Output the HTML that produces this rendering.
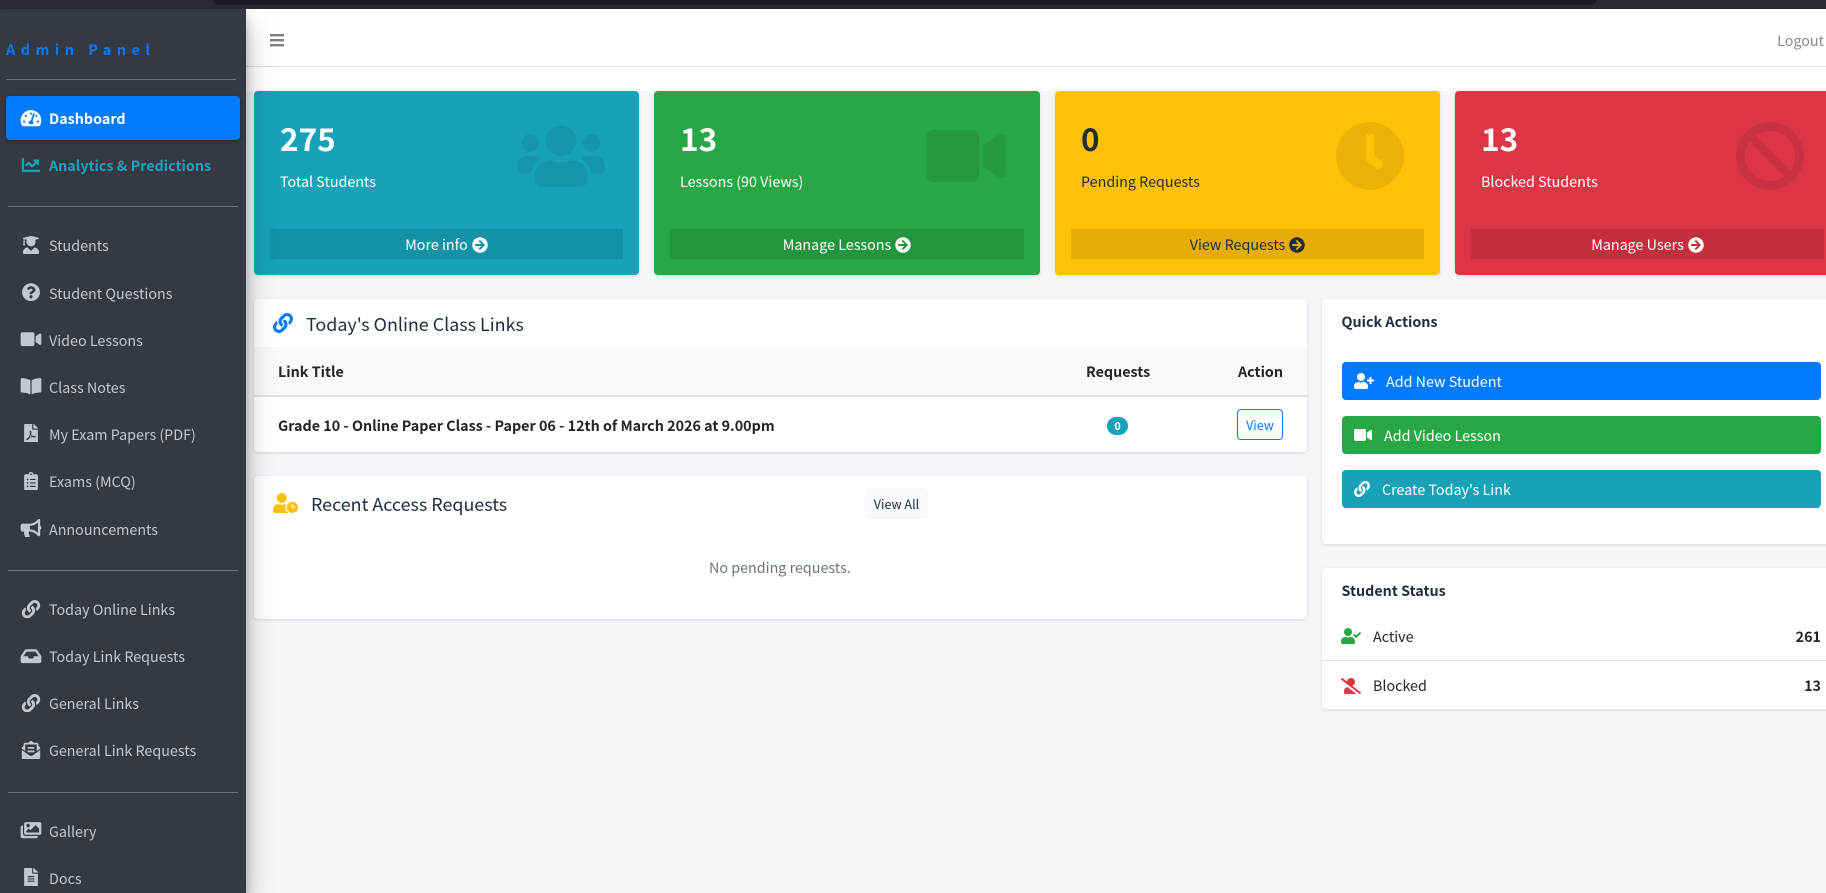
<!DOCTYPE html>
<html lang="en">
<head>
<meta charset="utf-8">
<title>Admin Panel</title>
<style>
html,body{margin:0;padding:0;width:1826px;height:893px;overflow:hidden;background:#f4f6f9}
body{position:relative;font-family:"Noto Sans CJK JP","Liberation Sans",sans-serif;font-size:14.32px;color:#212529}
div,svg,span{position:absolute;box-sizing:border-box}
.t{white-space:nowrap;line-height:24px;height:24px}
.b{font-weight:700}
.nav{left:49px;color:#c2c7d0}
svg{fill:currentColor;display:block;overflow:hidden}
.ni{left:18.5px;width:24px;height:18.4px;color:#c2c7d0}
.hr{height:1px;background:#6c727a}
.card{top:91px;width:385px;height:184px;border-radius:4px;color:#fff;box-shadow:0 1px 3px rgba(0,0,0,.12)}
.num{left:26px;top:22px;font-size:31.5px;font-weight:700;line-height:50px;white-space:nowrap}
.lab{left:26px;top:79px;line-height:24px;white-space:nowrap}
.big{top:30px;width:88px;height:70px;color:rgba(0,0,0,.08)}
.foot{left:16px;right:16px;top:138px;height:30px;background:rgba(0,0,0,.1);text-align:center;line-height:32px}
.foot span{position:static}
.foot svg{position:static;display:inline-block;width:16px;height:16px;vertical-align:-3px;margin-left:4px}
.panel{background:#fff;border-radius:4px;box-shadow:0 1px 3px rgba(0,0,0,.12)}
.btn{left:20px;width:479px;height:38px;border-radius:4px;color:#fff}
</style>
</head>
<body>
<svg width="0" height="0" style="position:absolute;left:0;top:0">
<symbol id="users" viewBox="0 0 640 512"><path d="M96 224c35.3 0 64-28.7 64-64s-28.7-64-64-64-64 28.7-64 64 28.7 64 64 64zm448 0c35.3 0 64-28.7 64-64s-28.7-64-64-64-64 28.7-64 64 28.7 64 64 64zm32 32h-64c-17.6 0-33.5 7.1-45.1 18.6 40.3 22.1 68.9 62 75.1 109.4h66c17.7 0 32-14.3 32-32v-32c0-35.3-28.7-64-64-64zm-256 0c61.9 0 112-50.1 112-112S381.9 32 320 32 208 82.1 208 144s50.1 112 112 112zm76.8 32h-8.3c-20.8 10-43.9 16-68.5 16s-47.6-6-68.5-16h-8.3C179.6 288 128 339.6 128 403.2V432c0 26.5 21.5 48 48 48h288c26.5 0 48-21.5 48-48v-28.8c0-63.6-51.6-115.2-115.2-115.2zm-223.7-13.4C161.5 263.1 145.6 256 128 256H64c-35.3 0-64 28.7-64 64v32c0 17.7 14.3 32 32 32h65.9c6.3-47.4 34.9-87.3 75.2-109.4z"/></symbol>
<symbol id="video" viewBox="0 0 576 512"><path d="M336.2 64H47.8C21.4 64 0 85.4 0 111.8v288.4C0 426.6 21.4 448 47.8 448h288.4c26.4 0 47.8-21.4 47.8-47.8V111.8c0-26.4-21.4-47.8-47.8-47.8zm189.4 37.7L416 177.3v157.4l109.6 75.5c21.2 14.6 50.4-.3 50.4-25.8V127.5c0-25.4-29.1-40.4-50.4-25.8z"/></symbol>
<symbol id="clock" viewBox="0 0 512 512"><path d="M256,8C119,8,8,119,8,256S119,504,256,504,504,393,504,256,393,8,256,8Zm92.49,313h0l-20,25a16,16,0,0,1-22.49,2.5h0l-67-49.72a40,40,0,0,1-15-31.23V112a16,16,0,0,1,16-16h32a16,16,0,0,1,16,16V256l58,42.5A16,16,0,0,1,348.49,321Z"/></symbol>
<symbol id="ban" viewBox="0 0 512 512"><path d="M256 8C119.034 8 8 119.033 8 256s111.034 248 248 248 248-111.034 248-248S392.967 8 256 8zm130.108 117.892c65.448 65.448 70 165.481 20.677 235.637L150.47 105.216c70.204-49.356 170.226-44.735 235.638 20.676zM125.892 386.108c-65.448-65.448-70-165.481-20.677-235.637L361.53 406.784c-70.203 49.356-170.226 44.736-235.638-20.676z"/></symbol>
<symbol id="arrow" viewBox="0 0 512 512"><path d="M256 8c137 0 248 111 248 248S393 504 256 504 8 393 8 256 119 8 256 8zm-28.9 143.6l75.5 72.4H120c-13.3 0-24 10.7-24 24v16c0 13.3 10.7 24 24 24h182.6l-75.5 72.4c-9.7 9.3-9.9 24.8-.4 34.3l11 10.9c9.4 9.4 24.6 9.4 33.9 0L404.3 273c9.4-9.4 9.4-24.6 0-33.9L271.6 106.3c-9.4-9.4-24.6-9.4-33.9 0l-11 10.9c-9.5 9.6-9.3 25.1.4 34.4z"/></symbol>
<symbol id="link" viewBox="0 0 512 512"><path d="M326.612 185.391c59.747 59.809 58.927 155.698.36 214.59-.11.12-.24.25-.36.37l-67.2 67.2c-59.27 59.27-155.699 59.262-214.96 0-59.27-59.26-59.27-155.7 0-214.96l37.106-37.106c9.84-9.84 26.786-3.3 27.294 10.606.648 17.722 3.826 35.527 9.69 52.721 1.986 5.822.567 12.262-3.783 16.612l-13.087 13.087c-28.026 28.026-28.905 73.66-1.155 101.96 28.024 28.579 74.086 28.749 102.325.51l67.2-67.19c28.191-28.191 28.073-73.757 0-101.83-3.701-3.694-7.429-6.564-10.341-8.569a16.037 16.037 0 0 1-6.947-12.606c-.396-10.567 3.348-21.456 11.698-29.806l21.054-21.055c5.521-5.521 14.182-6.199 20.584-1.731a152.482 152.482 0 0 1 20.522 17.197zM467.547 44.449c-59.261-59.262-155.69-59.27-214.96 0l-67.2 67.2c-.12.12-.25.25-.36.37-58.566 58.892-59.387 154.781.36 214.59a152.454 152.454 0 0 0 20.521 17.196c6.402 4.468 15.064 3.789 20.584-1.731l21.054-21.055c8.35-8.35 12.094-19.239 11.698-29.806a16.037 16.037 0 0 0-6.947-12.606c-2.912-2.005-6.64-4.875-10.341-8.569-28.073-28.073-28.191-73.639 0-101.83l67.2-67.19c28.239-28.239 74.3-28.069 102.325.51 27.75 28.3 26.872 73.934-1.155 101.96l-13.087 13.087c-4.35 4.35-5.769 10.79-3.783 16.612 5.864 17.194 9.042 34.999 9.69 52.721.509 13.906 17.454 20.446 27.294 10.606l37.106-37.106c59.271-59.259 59.271-155.699.001-214.959z"/></symbol>
<symbol id="question" viewBox="0 0 512 512"><path d="M504 256c0 136.997-111.043 248-248 248S8 392.997 8 256C8 119.083 119.043 8 256 8s248 111.083 248 248zM262.655 90c-54.497 0-89.255 22.957-116.549 63.758-3.536 5.286-2.353 12.415 2.715 16.258l34.699 26.31c5.205 3.947 12.621 3.008 16.665-2.122 17.864-22.658 30.113-35.797 57.303-35.797 20.429 0 45.698 13.148 45.698 32.958 0 14.976-12.363 22.667-32.534 33.976C247.128 238.528 216 254.941 216 296v4c0 6.627 5.373 12 12 12h56c6.627 0 12-5.373 12-12v-1.333c0-28.462 83.186-29.647 83.186-106.667 0-58.002-60.165-102-116.531-102zM256 338c-25.365 0-46 20.635-46 46 0 25.364 20.635 46 46 46s46-20.636 46-46c0-25.365-20.635-46-46-46z"/></symbol>
<symbol id="book" viewBox="0 0 576 512"><path d="M542.22 32.05c-54.8 3.11-163.72 14.43-230.96 55.59-4.64 2.84-7.27 7.89-7.27 13.17v363.87c0 11.55 12.63 18.85 23.28 13.49 69.18-34.82 169.23-44.32 218.7-46.92 16.89-.89 30.02-14.43 30.02-30.66V62.75c.01-17.71-15.35-31.74-33.77-30.7zM264.73 87.64C197.5 46.48 88.58 35.17 33.78 32.05 15.36 31.01 0 45.04 0 62.75V400.6c0 16.24 13.13 29.78 30.02 30.66 49.49 2.6 149.59 12.11 218.77 46.95 10.62 5.35 23.21-1.94 23.21-13.46V100.63c0-5.29-2.62-10.14-7.27-12.99z"/></symbol>
<symbol id="filealt" viewBox="0 0 384 512"><path d="M224 136V0H24C10.7 0 0 10.7 0 24v464c0 13.3 10.7 24 24 24h336c13.3 0 24-10.7 24-24V160H248c-13.2 0-24-10.8-24-24zm64 236c0 6.6-5.4 12-12 12H108c-6.6 0-12-5.4-12-12v-8c0-6.6 5.4-12 12-12h168c6.6 0 12 5.4 12 12v8zm0-64c0 6.6-5.4 12-12 12H108c-6.6 0-12-5.4-12-12v-8c0-6.6 5.4-12 12-12h168c6.6 0 12 5.4 12 12v8zm0-72v8c0 6.6-5.4 12-12 12H108c-6.6 0-12-5.4-12-12v-8c0-6.6 5.4-12 12-12h168c6.6 0 12 5.4 12 12zm96-114.1v6.1H256V0h6.1c6.4 0 12.5 2.5 17 7l97.9 98c4.5 4.5 7 10.6 7 16.9z"/></symbol>
<symbol id="pdf" viewBox="0 0 384 512"><path d="M181.9 256.1c-5-16-4.9-46.9-2-46.9 8.4 0 7.6 36.9 2 46.9zm-1.7 47.2c-7.7 20.2-17.3 43.3-28.4 62.7 18.3-7 39-17.2 62.9-21.9-12.7-9.6-24.9-23.4-34.5-40.8zM86.1 428.1c0 .8 13.2-5.4 34.9-40.2-6.7 6.3-29.1 24.5-34.9 40.2zM248 160h136v328c0 13.3-10.7 24-24 24H24c-13.3 0-24-10.7-24-24V24C0 10.7 10.7 0 24 0h200v136c0 13.2 10.8 24 24 24zm-8 171.8c-20-12.2-33.3-29-42.7-53.8 4.5-18.5 11.6-46.6 6.2-64.2-4.7-29.4-42.4-26.5-47.8-6.8-5 18.3-.4 44.1 8.1 77-11.6 27.6-28.7 64.6-40.8 85.8-.1 0-.1.1-.2.1-27.1 13.9-73.6 44.5-54.5 68 5.6 6.9 16 10 21.5 10 17.9 0 35.7-18 61.1-61.8 25.8-8.5 54.1-19.1 79-23.2 21.7 11.8 47.1 19.5 64 19.5 29.2 0 31.2-32 19.7-43.4-13.9-13.6-54.3-9.7-73.6-7.2zM377 105L279 7c-4.5-4.5-10.6-7-17-7h-6v128h128v-6.1c0-6.3-2.5-12.4-7-16.9zm-74.1 255.3c4.1-2.7-2.5-11.9-42.8-9 37.1 15.8 42.8 9 42.8 9z"/></symbol>
<symbol id="clip" viewBox="0 0 384 512"><path d="M336 64h-80c0-35.3-28.7-64-64-64s-64 28.7-64 64H48C21.5 64 0 85.5 0 112v352c0 26.5 21.5 48 48 48h288c26.5 0 48-21.5 48-48V112c0-26.5-21.5-48-48-48zM96 424c-13.3 0-24-10.7-24-24s10.7-24 24-24 24 10.7 24 24-10.7 24-24 24zm0-96c-13.3 0-24-10.7-24-24s10.7-24 24-24 24 10.7 24 24-10.7 24-24 24zm0-96c-13.3 0-24-10.7-24-24s10.7-24 24-24 24 10.7 24 24-10.7 24-24 24zm96-192c13.3 0 24 10.7 24 24s-10.7 24-24 24-24-10.7-24-24 10.7-24 24-24zm128 368c0 4.4-3.6 8-8 8H168c-4.4 0-8-3.6-8-8v-16c0-4.4 3.6-8 8-8h144c4.4 0 8 3.6 8 8v16zm0-96c0 4.4-3.6 8-8 8H168c-4.4 0-8-3.6-8-8v-16c0-4.4 3.6-8 8-8h144c4.4 0 8 3.6 8 8v16zm0-96c0 4.4-3.6 8-8 8H168c-4.4 0-8-3.6-8-8v-16c0-4.4 3.6-8 8-8h144c4.4 0 8 3.6 8 8v16z"/></symbol>
<symbol id="horn" viewBox="0 0 576 512"><path d="M576 240c0-23.63-12.95-44.04-32-55.12V32.01C544 23.26 537.02 0 512 0c-7.12 0-14.19 2.38-19.98 7.02l-85.03 68.03C364.28 109.19 310.66 128 256 128H64c-35.35 0-64 28.65-64 64v96c0 35.35 28.65 64 64 64h33.7c-1.39 10.48-2.18 21.14-2.18 32 0 39.77 9.26 77.35 25.56 110.94 5.19 10.69 16.52 17.06 28.4 17.06h74.28c26.05 0 41.69-29.84 25.9-50.56-16.4-21.52-26.15-48.36-26.15-77.44 0-11.11 1.62-21.79 4.41-32H256c54.66 0 108.28 18.81 150.98 52.95l85.03 68.03a32.023 32.023 0 0 0 19.98 7.02c24.92 0 32-22.78 32-32V295.13C563.05 284.04 576 263.63 576 240zm-96 141.42l-33.05-26.44C392.95 311.78 325.12 288 256 288v-96c69.12 0 136.95-23.78 190.95-66.98L480 98.58v282.84z"/></symbol>
<symbol id="inbox" viewBox="0 0 576 512"><path d="M567.938 243.908L462.25 85.374A48.003 48.003 0 0 0 422.311 64H153.689a48 48 0 0 0-39.938 21.374L8.062 243.908A47.994 47.994 0 0 0 0 270.533V400c0 26.51 21.49 48 48 48h480c26.51 0 48-21.49 48-48V270.533a47.994 47.994 0 0 0-8.062-26.625zM162.252 128h251.497l85.333 128H376l-32 64H232l-32-64H76.918l85.334-128z"/></symbol>
<symbol id="tach" viewBox="0 0 576 512"><path d="M288 32C128.94 32 0 160.94 0 320c0 52.8 14.25 102.26 39.06 144.8 5.61 9.62 16.3 15.2 27.44 15.2h443c11.14 0 21.83-5.58 27.44-15.2C561.75 422.26 576 372.8 576 320c0-159.06-128.94-288-288-288zm0 64c14.71 0 26.58 10.13 30.32 23.65-1.11 2.26-2.64 4.23-3.45 6.67l-9.22 27.67c-5.13 3.49-10.97 6.01-17.64 6.01-17.67 0-32-14.33-32-32S270.33 96 288 96zM96 384c-17.67 0-32-14.33-32-32s14.33-32 32-32 32 14.33 32 32-14.33 32-32 32zm48-160c-17.67 0-32-14.33-32-32s14.33-32 32-32 32 14.33 32 32-14.33 32-32 32zm246.77-72.41l-61.33 184C343.13 347.33 352 364.54 352 384c0 11.72-3.38 22.55-8.88 32H232.88c-5.5-9.45-8.88-20.28-8.88-32 0-33.94 26.5-61.43 59.9-63.59l61.34-184.01c4.17-12.56 17.73-19.45 30.36-15.17 12.57 4.19 19.35 17.79 15.17 30.36zm14.66 57.2l15.52-46.55c3.47-1.29 7.13-2.23 11.05-2.23 17.67 0 32 14.33 32 32s-14.33 32-32 32c-11.38-.01-20.89-6.28-26.57-15.22zM480 384c-17.67 0-32-14.33-32-32s14.33-32 32-32 32 14.33 32 32-14.33 32-32 32z"/></symbol>
<symbol id="chart" viewBox="0 0 512 512"><path d="M496 384H64V80c0-8.84-7.16-16-16-16H16C7.16 64 0 71.16 0 80v336c0 17.67 14.33 32 32 32h464c8.84 0 16-7.16 16-16v-32c0-8.84-7.16-16-16-16zM464 96H345.94c-21.38 0-32.09 25.85-16.97 40.97l32.4 32.4L288 242.75l-73.37-73.37c-12.5-12.5-32.76-12.5-45.25 0l-68.69 68.69c-6.25 6.25-6.25 16.38 0 22.63l22.62 22.62c6.25 6.25 16.38 6.25 22.63 0L192 237.25l73.37 73.37c12.5 12.5 32.76 12.5 45.25 0l96-96 32.4 32.4c15.12 15.12 40.97 4.41 40.97-16.97V112c.01-8.84-7.15-16-15.99-16z"/></symbol>
<symbol id="grad" viewBox="0 0 448 512"><path d="M319.4 320.6L224 416l-95.4-95.4C57.1 323.7 0 382.2 0 454.4v9.6c0 26.5 21.5 48 48 48h352c26.5 0 48-21.5 48-48v-9.6c0-72.2-57.1-130.7-128.6-133.8zM13.6 79.8l6.4 1.5v58.4c-7 4.2-12 11.5-12 20.3 0 8.4 4.6 15.4 11.1 19.7L3.5 242c-1.7 6.9 2.1 14 7.6 14h41.8c5.5 0 9.3-7.1 7.6-14l-15.6-62.3C51.4 175.4 56 168.4 56 160c0-8.8-5-16.1-12-20.3V87.1l66 15.9c-8.6 17.2-14 36.4-14 57 0 70.7 57.3 128 128 128s128-57.3 128-128c0-20.6-5.3-39.8-14-57l96.3-23.2c18.2-4.4 18.2-27.1 0-31.5l-190.4-46c-13-3.1-26.7-3.1-39.7 0L13.6 48.2c-18.1 4.4-18.1 27.2 0 31.6z"/></symbol>
<symbol id="images" viewBox="0 0 576 512"><path d="M480 416v16c0 26.51-21.49 48-48 48H48c-26.51 0-48-21.49-48-48V176c0-26.51 21.49-48 48-48h16v208c0 44.112 35.888 80 80 80h336zm96-80V80c0-26.51-21.49-48-48-48H144c-26.51 0-48 21.49-48 48v256c0 26.51 21.49 48 48 48h384c26.51 0 48-21.49 48-48zM256 128c0 26.51-21.49 48-48 48s-48-21.49-48-48 21.49-48 48-48 48 21.49 48 48zm-96 144l55.515-55.515c4.686-4.686 12.284-4.686 16.971 0L272 256l135.515-135.515c4.686-4.686 12.284-4.686 16.971 0L512 208v112H160v-48z"/></symbol>
<symbol id="envtext" viewBox="0 0 512 512"><path d="M176 216h160c8.84 0 16-7.16 16-16v-16c0-8.84-7.16-16-16-16H176c-8.84 0-16 7.16-16 16v16c0 8.84 7.16 16 16 16zm-16 80c0 8.84 7.16 16 16 16h160c8.84 0 16-7.16 16-16v-16c0-8.84-7.16-16-16-16H176c-8.84 0-16 7.16-16 16v16zm96 121.13c-16.42 0-32.84-5.06-46.86-15.19L0 250.86V464c0 26.51 21.49 48 48 48h416c26.51 0 48-21.49 48-48V250.86L302.86 401.94c-14.02 10.12-30.44 15.19-46.86 15.19zm237.61-254.18c-8.85-6.94-17.24-13.47-29.61-22.81V96c0-26.51-21.49-48-48-48h-77.55c-3.04-2.2-5.87-4.26-9.04-6.56C312.6 29.17 279.2-.35 256 0c-23.2-.35-56.59 29.17-73.41 41.44-3.17 2.3-6 4.36-9.04 6.56H96c-26.51 0-48 21.49-48 48v44.14c-12.37 9.33-20.76 15.87-29.61 22.81A47.995 47.995 0 0 0 0 200.72v10.65l96 69.35V96h320v184.72l96-69.35v-10.65c0-14.74-6.78-28.67-18.39-37.77z"/></symbol>
<symbol id="userclock" viewBox="0 0 640 512"><path d="M496 224c-79.6 0-144 64.4-144 144s64.4 144 144 144 144-64.4 144-144-64.4-144-144-144zm64 150.3c0 5.3-4.4 9.7-9.7 9.7h-60.6c-5.3 0-9.7-4.4-9.7-9.7v-76.6c0-5.3 4.4-9.7 9.7-9.7h12.6c5.3 0 9.7 4.4 9.7 9.7V352h38.3c5.3 0 9.7 4.4 9.7 9.7v12.6zM320 368c0-27.8 6.7-54.1 18.2-77.5-8-1.5-16.2-2.5-24.6-2.5h-16.7c-22.2 10.2-46.9 16-72.9 16s-50.6-5.8-72.9-16h-16.7C60.2 288 0 348.2 0 422.4V464c0 26.5 21.5 48 48 48h347.1c-45.3-31.9-75.1-84.5-75.1-144zm-96-112c70.7 0 128-57.3 128-128S294.7 0 224 0 96 57.3 96 128s57.3 128 128 128z"/></symbol>
<symbol id="userplus" viewBox="0 0 640 512"><path d="M624 208h-64v-64c0-8.8-7.2-16-16-16h-32c-8.8 0-16 7.2-16 16v64h-64c-8.8 0-16 7.2-16 16v32c0 8.8 7.2 16 16 16h64v64c0 8.8 7.2 16 16 16h32c8.8 0 16-7.2 16-16v-64h64c8.8 0 16-7.2 16-16v-32c0-8.8-7.2-16-16-16zm-400 48c70.7 0 128-57.3 128-128S294.7 0 224 0 96 57.3 96 128s57.3 128 128 128zm89.6 32h-16.7c-22.2 10.2-46.9 16-72.9 16s-50.6-5.8-72.9-16h-16.7C60.2 288 0 348.2 0 422.4V464c0 26.5 21.5 48 48 48h352c26.5 0 48-21.5 48-48v-41.6c0-74.2-60.2-134.4-134.4-134.4z"/></symbol>
<symbol id="usercheck" viewBox="0 0 640 512"><path d="M224 256c70.7 0 128-57.3 128-128S294.7 0 224 0 96 57.3 96 128s57.3 128 128 128zm89.6 32h-16.7c-22.2 10.2-46.9 16-72.9 16s-50.6-5.8-72.9-16h-16.7C60.2 288 0 348.2 0 422.4V464c0 26.5 21.5 48 48 48h352c26.5 0 48-21.5 48-48v-41.6c0-74.2-60.2-134.4-134.4-134.4zm323-128.4l-27.8-28.1c-4.6-4.7-12.1-4.7-16.8-.1l-104.8 104-45.5-45.8c-4.6-4.7-12.1-4.7-16.8-.1l-28.1 27.9c-4.7 4.6-4.7 12.1-.1 16.8l81.7 82.3c4.6 4.7 12.1 4.7 16.8.1l141.3-140.2c4.6-4.7 4.7-12.2.1-16.8z"/></symbol>
<symbol id="userslash" viewBox="0 0 640 512"><path d="M633.8 458.1L362.3 248.3C412.1 230.7 448 183.8 448 128 448 57.3 390.7 0 320 0c-67.1 0-121.5 51.8-126.9 117.4L45.5 3.4C38.5-2 28.5-.8 23 6.2L3.4 31.4c-5.4 7-4.2 17 2.8 22.4l588.4 454.7c7 5.4 17 4.2 22.5-2.8l19.6-25.3c5.4-6.8 4.1-16.9-2.9-22.3zM96 422.4V464c0 26.5 21.5 48 48 48h350.2L207.4 290.3C144.2 301.3 96 356 96 422.4z"/></symbol>
</svg>

<!-- browser chrome strip -->
<div style="left:0;top:0;width:1826px;height:9px;background:#2a2a35"></div>
<div style="left:213px;top:0;width:1383px;height:5px;background:#1c1c24;border-radius:0 0 5px 5px"></div>

<!-- navbar -->
<div style="left:246px;top:9px;width:1580px;height:82px;background:#fff"></div>
<div style="left:246px;top:66px;width:1580px;height:1px;background:#e0e0ea"></div>
<svg style="left:270px;top:33px;width:14px;height:14px;color:#808080"><rect x="0" y="1" width="14" height="2.4"/><rect x="0" y="6" width="14" height="2.4"/><rect x="0" y="11" width="14" height="2.4"/></svg>
<div class="t" style="right:2px;top:29px;color:#858a8f">Logout</div>

<!-- stat cards -->
<div class="card" style="left:254px;background:#17a2b8">
  <div class="num">275</div><div class="lab">Total Students</div>
  <svg class="big" style="left:263px"><use href="#users"/></svg>
  <div class="foot"><span>More info</span><svg><use href="#arrow"/></svg></div>
</div>
<div class="card" style="left:654px;width:386px;background:#28a745">
  <div class="num">13</div><div class="lab">Lessons (90 Views)</div>
  <svg class="big" style="left:267.5px"><use href="#video"/></svg>
  <div class="foot"><span>Manage Lessons</span><svg><use href="#arrow"/></svg></div>
</div>
<div class="card" style="left:1055px;background:#ffc107;color:#1f2d3d">
  <div class="num">0</div><div class="lab">Pending Requests</div>
  <svg class="big" style="left:271px"><use href="#clock"/></svg>
  <div class="foot"><span>View Requests</span><svg><use href="#arrow"/></svg></div>
</div>
<div class="card" style="left:1455px;background:#dc3545">
  <div class="num">13</div><div class="lab">Blocked Students</div>
  <svg class="big" style="left:271px"><use href="#ban"/></svg>
  <div class="foot"><span>Manage Users</span><svg><use href="#arrow"/></svg></div>
</div>

<!-- Today's links -->
<div class="panel" style="left:254px;top:299px;width:1053px;height:153px"></div>
<svg style="left:273px;top:313px;width:20px;height:20px;color:#007bff"><use href="#link"/></svg>
<div class="t" style="left:306px;top:312px;font-size:17.9px;color:#1f2d3d">Today's Online Class Links</div>
<div style="left:254px;top:347px;width:1053px;height:50px;background:#f8f9fa;border-bottom:2px solid #dee2e6"></div>
<div class="t b" style="left:278px;top:360px;color:#212529">Link Title</div>
<div class="t b" style="left:1086px;top:360px">Requests</div>
<div class="t b" style="left:1238px;top:360px">Action</div>
<div class="t b" style="left:278px;top:414px">Grade 10 - Online Paper Class - Paper 06 - 12th of March 2026 at 9.00pm</div>
<div class="b" style="left:1107px;top:417px;width:21px;height:18px;border-radius:10px;background:#17a2b8;color:#fff;font-size:10.8px;line-height:18px;text-align:center">0</div>
<div style="left:1237px;top:409px;width:46px;height:31px;border:1px solid #007bff;border-radius:4px;color:#007bff;font-size:12.6px;line-height:29px;text-align:center">View</div>

<!-- Recent requests -->
<div class="panel" style="left:254px;top:476px;width:1053px;height:143px"></div>
<svg style="left:273px;top:493px;width:25px;height:20px;color:#ffc107"><use href="#userclock"/></svg>
<div class="t" style="left:311px;top:492px;font-size:17.9px;color:#1f2d3d">Recent Access Requests</div>
<div style="left:865px;top:488px;width:63px;height:31px;background:#f8f9fa;border-radius:4px;font-size:12.6px;line-height:31px;text-align:center;color:#1f2d3d">View All</div>
<div class="t" style="left:709px;top:556px;color:#6c757d">No pending requests.</div>

<!-- Quick actions -->
<div class="panel" style="left:1322px;top:299px;width:520px;height:245px">
  <div class="t b" style="left:19.5px;top:11px;color:#1f2d3d">Quick Actions</div>
  <div class="btn" style="top:63px;background:#007bff">
    <svg style="left:12px;top:11px;width:20px;height:16px"><use href="#userplus"/></svg>
    <div class="t" style="left:44px;top:8px">Add New Student</div>
  </div>
  <div class="btn" style="top:117px;background:#28a745">
    <svg style="left:12px;top:11px;width:18px;height:16px"><use href="#video"/></svg>
    <div class="t" style="left:42px;top:8px">Add Video Lesson</div>
  </div>
  <div class="btn" style="top:171px;background:#17a2b8">
    <svg style="left:12px;top:11px;width:16px;height:16px"><use href="#link"/></svg>
    <div class="t" style="left:40px;top:8px">Create Today's Link</div>
  </div>
</div>

<!-- Student status -->
<div class="panel" style="left:1322px;top:568px;width:520px;height:141px">
  <div class="t b" style="left:19.5px;top:11px;color:#1f2d3d">Student Status</div>
  <svg style="left:19px;top:60px;width:20px;height:16px;color:#28a745"><use href="#usercheck"/></svg>
  <div class="t" style="left:51px;top:57px">Active</div>
  <div class="t b" style="right:21px;top:57px">261</div>
  <div style="left:0;top:92px;width:520px;height:1px;background:#dee2e6"></div>
  <svg style="left:19px;top:110px;width:20px;height:16px;color:#dc3545"><use href="#userslash"/></svg>
  <div class="t" style="left:51px;top:106px">Blocked</div>
  <div class="t b" style="right:21px;top:106px">13</div>
</div>

<!-- sidebar -->
<div style="left:0;top:9px;width:246px;height:884px;background:#343944;box-shadow:0 14px 28px rgba(0,0,0,.25),0 10px 10px rgba(0,0,0,.22)"></div>
<div class="t b" style="left:6px;top:38px;color:#007bff;font-size:14.4px;letter-spacing:5.5px">Admin Panel</div>
<div class="hr" style="left:6px;top:79px;width:230px"></div>

<div style="left:6px;top:96px;width:234px;height:44px;background:#007bff;border-radius:4px;box-shadow:0 1px 3px rgba(0,0,0,.3)"></div>
<svg class="ni" style="top:109px;color:#fff"><use href="#tach"/></svg>
<div class="t b" style="left:49px;top:107px;color:#fff">Dashboard</div>
<svg class="ni" style="top:156px;color:#17a2b8"><use href="#chart"/></svg>
<div class="t b" style="left:49px;top:154px;color:#17a2b8">Analytics &amp; Predictions</div>
<div class="hr" style="left:8px;top:206px;width:230px"></div>

<svg class="ni" style="top:236px"><use href="#grad"/></svg><div class="t nav" style="top:234px">Students</div>
<svg class="ni" style="top:283px"><use href="#question"/></svg><div class="t nav" style="top:282px">Student Questions</div>
<svg class="ni" style="top:330px"><use href="#video"/></svg><div class="t nav" style="top:329px">Video Lessons</div>
<svg class="ni" style="top:377px"><use href="#book"/></svg><div class="t nav" style="top:376px">Class Notes</div>
<svg class="ni" style="top:424px"><use href="#pdf"/></svg><div class="t nav" style="top:423px">My Exam Papers (PDF)</div>
<svg class="ni" style="top:472px"><use href="#clip"/></svg><div class="t nav" style="top:470px">Exams (MCQ)</div>
<svg class="ni" style="top:519px"><use href="#horn"/></svg><div class="t nav" style="top:518px">Announcements</div>
<div class="hr" style="left:8px;top:570px;width:230px"></div>

<svg class="ni" style="top:600px"><use href="#link"/></svg><div class="t nav" style="top:598px">Today Online Links</div>
<svg class="ni" style="top:647px"><use href="#inbox"/></svg><div class="t nav" style="top:645px">Today Link Requests</div>
<svg class="ni" style="top:694px"><use href="#link"/></svg><div class="t nav" style="top:692px">General Links</div>
<svg class="ni" style="top:741px"><use href="#envtext"/></svg><div class="t nav" style="top:739px">General Link Requests</div>
<div class="hr" style="left:8px;top:792px;width:230px"></div>

<svg class="ni" style="top:821px"><use href="#images"/></svg><div class="t nav" style="top:820px">Gallery</div>
<svg class="ni" style="top:868px"><use href="#filealt"/></svg><div class="t nav" style="top:867px">Docs</div>
</body>
</html>
